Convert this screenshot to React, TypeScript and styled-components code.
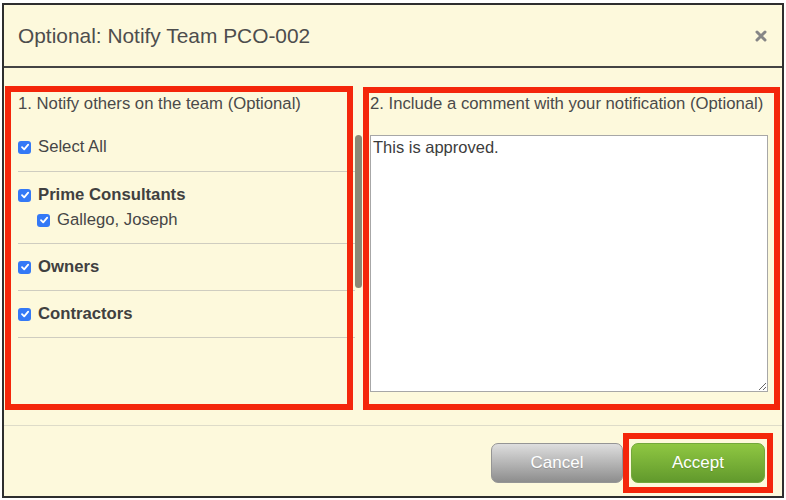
import React from 'react'
import styled, { createGlobalStyle } from 'styled-components'

const GlobalStyle = createGlobalStyle`
  html, body {
    margin: 0;
    padding: 0;
    background: #ffffff;
  }
  body {
    font-family: "Liberation Sans", Arial, sans-serif;
  }
  * {
    box-sizing: border-box;
  }
`

const Page = styled.div`
  padding: 3px 2px 2px 2px;
`

const Dialog = styled.div`
  width: 782px;
  height: 495px;
  border: 2px solid #2e2e2e;
  background: #fdf9dc;
  display: flex;
  flex-direction: column;
`

const Header = styled.div`
  height: 63px;
  border-bottom: 2px solid #444;
  display: flex;
  align-items: center;
  justify-content: space-between;
  padding: 0 15px 0 14px;
`

const Title = styled.h1`
  margin: 0;
  font-size: 20.9px;
  font-weight: 400;
  color: #4d4d4d;
`

const CloseButton = styled.button`
  border: 0;
  background: transparent;
  padding: 0;
  width: 12px;
  height: 12px;
  display: flex;
  cursor: pointer;
`

const Body = styled.div`
  display: flex;
  gap: 8px;
  padding: 26px 14px 33px 14px;
`

const Column = styled.div<{ $width: number; $mark: string }>`
  position: relative;
  width: ${(p) => p.$width}px;
  display: flex;
  flex-direction: column;

  &::after {
    content: '';
    position: absolute;
    inset: ${(p) => p.$mark};
    border: 6px solid #f4260a;
    pointer-events: none;
  }
`

const ColumnHeading = styled.div`
  font-size: 16.7px;
  line-height: 20px;
  color: #4a4a4a;
  margin-bottom: 21px;
  white-space: nowrap;
`

const ListArea = styled.div`
  height: 257px;
  display: flex;
  overflow: hidden;
`

const List = styled.div`
  flex: 1;
`

const ScrollTrack = styled.div`
  width: 7px;
  flex-shrink: 0;
`

const ScrollThumb = styled.div<{ $size: number }>`
  height: ${(p) => p.$size}px;
  border-radius: 4px;
  background: #8b8875;
`

const Group = styled.div<{ $first?: boolean }>`
  padding: ${(p) => (p.$first ? '0 0 12px' : '11px 0 11px')};
  border-bottom: 1px solid #cfcdc0;
`

const Row = styled.label<{ $indent?: boolean; $bold?: boolean }>`
  display: flex;
  align-items: center;
  gap: 7px;
  height: 24px;
  padding-left: ${(p) => (p.$indent ? '19px' : '0')};
  margin-top: ${(p) => (p.$indent ? '1px' : '0')};
  font-size: 16.7px;
  font-weight: ${(p) => (p.$bold ? 700 : 400)};
  color: ${(p) => (p.$bold ? '#404040' : '#464646')};
  cursor: pointer;
`

const Box = styled.span`
  width: 13px;
  height: 13px;
  border-radius: 3px;
  background: #3479f6;
  display: flex;
  align-items: center;
  justify-content: center;
  flex-shrink: 0;
`

const Comment = styled.textarea`
  width: 398px;
  height: 257px;
  border: 1px solid #a7a7a7;
  background: #fff;
  padding: 2px;
  font-family: "Liberation Sans", Arial, sans-serif;
  font-size: 16.5px;
  line-height: 19px;
  color: #3c3c3c;
  outline: none;
`

const Footer = styled.div`
  border-top: 1px solid #dedcc9;
  flex: 1;
  display: flex;
  justify-content: flex-end;
  align-items: flex-start;
  gap: 8px;
  padding: 17px 17px 0 0;
`

const Action = styled.button<{ $variant: 'cancel' | 'accept'; $mark?: boolean }>`
  position: relative;
  width: ${(p) => (p.$variant === 'accept' ? 134 : 132)}px;
  height: 40px;
  border-radius: 7px;
  font-family: "Liberation Sans", Arial, sans-serif;
  font-size: 17px;
  color: #fff;
  text-shadow: 0 1px 1px rgba(0, 0, 0, 0.15);
  cursor: pointer;
  border: 1px solid ${(p) => (p.$variant === 'accept' ? '#73a83c' : '#959595')};
  background: ${(p) =>
    p.$variant === 'accept'
      ? 'linear-gradient(#8fc742, #61992c)'
      : 'linear-gradient(#dedede, #8d8d8d)'};

  &::after {
    content: '';
    display: ${(p) => (p.$mark ? 'block' : 'none')};
    position: absolute;
    inset: -11px -9px -11px -9px;
    border: 6px solid #f4260a;
    pointer-events: none;
  }
`

const Check = () => (
  <Box>
    <svg width="10" height="10" viewBox="0 0 10 10">
      <path d="M2 5.2 L4.2 7.4 L8.2 2.6" fill="none" stroke="#fff" strokeWidth="1.8" strokeLinecap="round" strokeLinejoin="round" />
    </svg>
  </Box>
)

const groups = [
  { name: 'Prime Consultants', members: ['Gallego, Joseph'] },
  { name: 'Owners', members: [] as string[] },
  { name: 'Contractors', members: [] as string[] },
]

const App = () => {
  return (
    <>
      <GlobalStyle />
      <Page>
        <Dialog>
          <Header>
            <Title>Optional: Notify Team PCO-002</Title>
            <CloseButton aria-label="Close">
              <svg width="12" height="12" viewBox="0 0 12 12">
                <path d="M2 2 L10 10 M10 2 L2 10" stroke="#868686" strokeWidth="3" strokeLinecap="round" />
              </svg>
            </CloseButton>
          </Header>
          <Body>
            <Column $width={344} $mark="-8px 9px -18px -13px">
              <ColumnHeading>1. Notify others on the team (Optional)</ColumnHeading>
              <ListArea>
                <List>
                  <Group $first>
                    <Row>
                      <Check />
                      Select All
                    </Row>
                  </Group>
                  {groups.map((g) => (
                    <Group key={g.name}>
                      <Row $bold>
                        <Check />
                        {g.name}
                      </Row>
                      {g.members.map((m) => (
                        <Row key={m} $indent>
                          <Check />
                          {m}
                        </Row>
                      ))}
                    </Group>
                  ))}
                </List>
                <ScrollTrack>
                  <ScrollThumb $size={153} />
                </ScrollTrack>
              </ListArea>
            </Column>
            <Column $width={398} $mark="-7px -12px -18px -7px">
              <ColumnHeading>2. Include a comment with your notification (Optional)</ColumnHeading>
              <Comment defaultValue="This is approved." />
            </Column>
          </Body>
          <Footer>
            <Action $variant="cancel">Cancel</Action>
            <Action $variant="accept" $mark>
              Accept
            </Action>
          </Footer>
        </Dialog>
      </Page>
    </>
  )
}

export default App
